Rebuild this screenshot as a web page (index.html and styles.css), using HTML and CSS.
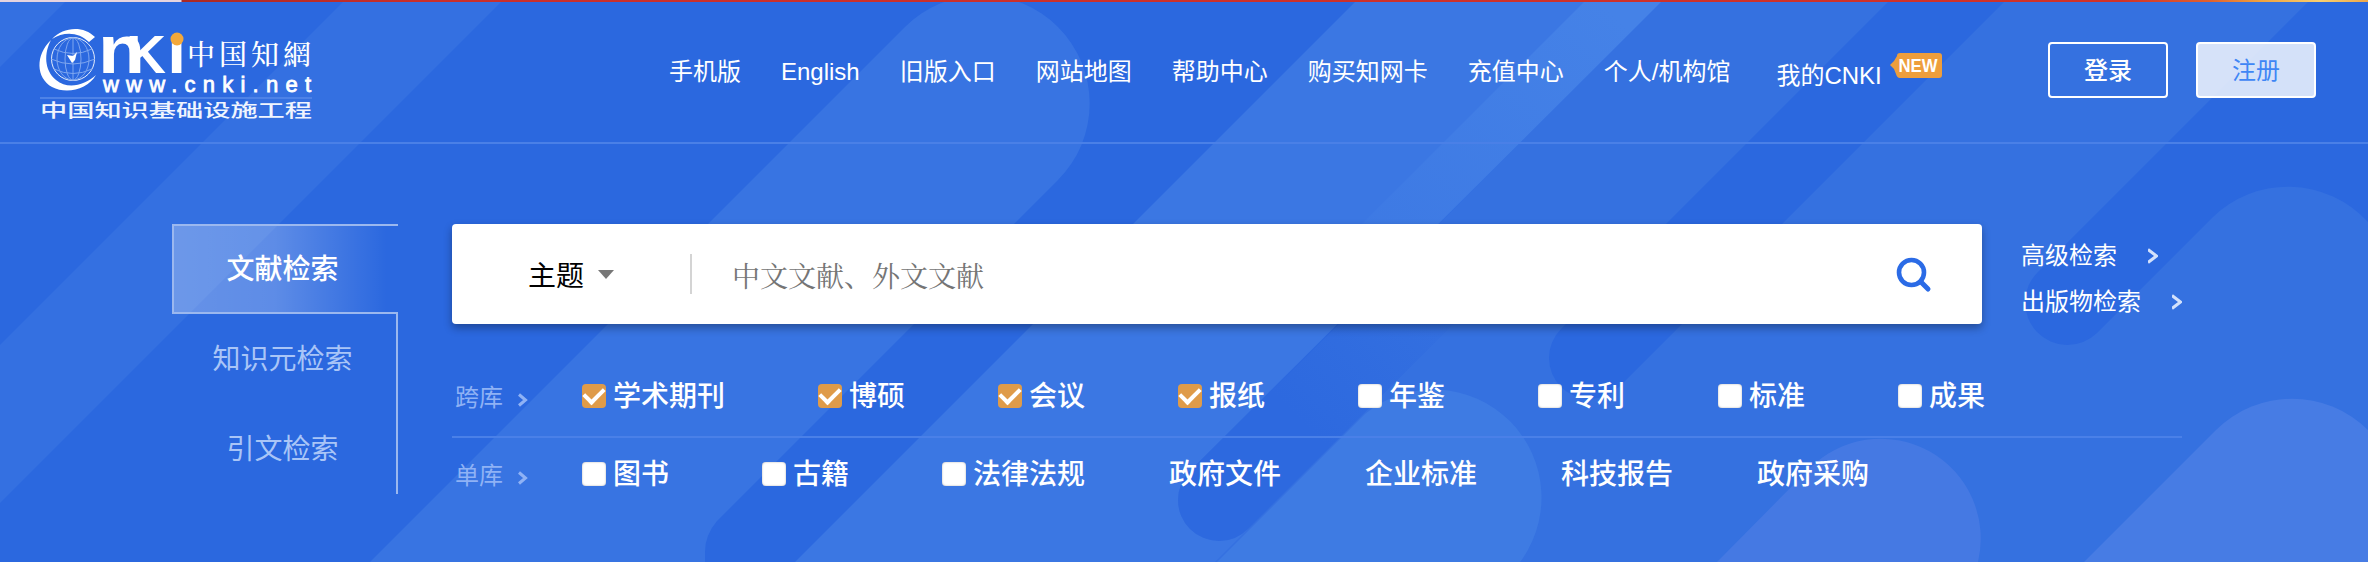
FILE: index.html
```html
<!DOCTYPE html>
<html lang="zh-CN">
<head>
<meta charset="utf-8">
<title>中国知网</title>
<link rel="stylesheet" href="styles.css">
</head>
<body>
<div class="page">
  <svg class="backdrop" viewBox="0 0 2368 562" aria-hidden="true">
    <defs>
      <linearGradient id="gap" gradientUnits="userSpaceOnUse" x1="1450" y1="270" x2="1300" y2="420"><stop offset="0" stop-color="#2d69df" stop-opacity="0"/><stop offset="1" stop-color="#2d69df"/></linearGradient>
      <linearGradient id="beam" gradientUnits="userSpaceOnUse" x1="1600" y1="0" x2="1300" y2="300"><stop offset="0" stop-color="#4582e7"/><stop offset="1" stop-color="#4582e7" stop-opacity="0"/></linearGradient>
    </defs>
    <path fill="#3470e1" d="M0 0H67L0 67ZM345 0H503L0 503V345Z"/>
    <path fill="#3874e2" d="M905 27A108 108 0 0 1 1058 180L717 521Q705 535 705 552V562H370Z"/>
    <path fill="#3571e0" d="M1663 0H1890L1561 329A41 41 0 0 0 1619 387L2006 0H2310L2038 272A42 42 0 0 0 2097 333L2212 218A108 108 0 0 1 2368 222V562H1101Z"/>
    <path fill="#3b77e3" d="M1357 0H1663L1190 471A41 41 0 0 0 1248 529L1215 562H795Z"/>
    <path fill="url(#beam)" d="M1586 0H1663L1313 350H1236Z"/>
    <path fill="url(#gap)" d="M1460 203L1190 471A41 41 0 0 0 1248 529L1560 218Z"/>
    <path fill="#3e7be3" d="M1365 414A108 108 0 0 1 1517 566H1213Z"/>
    <path fill="#4579e3" d="M1809 469A100 100 0 0 1 1978 562H1717Z"/>
    <path fill="#477ce4" d="M2216 430A108 108 0 0 1 2368 430V562H2084Z"/>
  </svg>
  <div class="strip"></div>
  <header class="header">
    <svg class="logo" viewBox="0 0 272 90" role="img" aria-label="CNKI">
      <path fill="#fff" d="M12 11C23-1 43-3 55 9L49 14C39 4 24 3 12 11ZM11 12C-5 27-4 50 12 59C27 67 48 61 56 47C45 57 28 62 16 52C4 42 4 25 11 12Z"/>
      <g fill="none" stroke="#7ea6ef" stroke-width="1"><circle cx="33" cy="31" r="21.500" stroke="#e6eefc"/><ellipse cx="33" cy="31" rx="8" ry="21"/><ellipse cx="33" cy="31" rx="16" ry="21"/><path d="M14 21Q33 30 52 21M11 31Q33 41 55 31M14 41Q33 50 52 41M33 10V52"/></g>
      <path fill="#fff" d="M27 27L33 28L37 24L35 32L32 35Z"/>
      <g fill="#fff" class="logo-bold">
        <text x="58" y="45" font-size="69" textLength="47" lengthAdjust="spacingAndGlyphs">n</text>
        <text x="86" y="45" font-size="53" textLength="40" lengthAdjust="spacingAndGlyphs">K</text>
        <text x="127" y="45" font-size="69">ı</text>
        <text class="logo-url" x="63" y="64" font-size="22" textLength="208">www.cnki.net</text>
      </g>
      <circle cx="137" cy="11" r="6.500" fill="#f3a83b"/>
      <text class="logo-brush" x="147" y="37" font-size="28" textLength="124" fill="#fff">中国知網</text>
      <path stroke="#4d82e7" stroke-width="2" d="M0 70H272"/>
      <text class="logo-sub" x="0" y="89" font-size="18" textLength="272" lengthAdjust="spacingAndGlyphs" fill="#f0f5fe">中国知识基础设施工程</text>
    </svg>
    <nav class="nav">
      <a>手机版</a><a>English</a><a>旧版入口</a><a>网站地图</a><a>帮助中心</a><a>购买知网卡</a><a>充值中心</a><a>个人/机构馆</a>
      <a class="mine">我的CNKI<svg class="new" viewBox="0 0 54 28"><path fill="#ee9e3c" d="M8 4Q8 1 11 1H50Q53 1 53 4V23Q53 26 50 26H11Q8 26 7 22L5 17L1 13L5 9Z"/><text x="9.500" y="20" font-size="18" textLength="39" lengthAdjust="spacingAndGlyphs" fill="#fff">NEW</text></svg></a>
    </nav>
    <div class="account"><button class="btn">登录</button><button class="btn register">注册</button></div>
  </header>
  <main class="main">
    <ul class="tabs"><li class="active">文献检索</li><li>知识元检索</li><li>引文检索</li></ul>
    <section class="content">
      <div class="top">
        <div class="search">
          <div class="field">主题<span class="caret"></span></div>
          <div class="query">中文文献、外文文献</div>
          <svg class="glass" viewBox="0 0 36 36" fill="none" stroke="#2b6be6"><circle cx="15.500" cy="15.500" r="12.500" stroke-width="4.600"/><path stroke-width="5" stroke-linecap="round" d="M24.500 24.500L32 32"/></svg>
        </div>
        <div class="links">
          <a>高级检索<svg viewBox="0 0 10 16"><path d="M0 1.500L8.500 8L0 14.500"/></svg></a>
          <a>出版物检索<svg viewBox="0 0 10 16"><path d="M0 1.500L8.500 8L0 14.500"/></svg></a>
        </div>
      </div>
      <div class="row cross">
        <span class="label">跨库<svg viewBox="0 0 10 14"><path d="M1 1.500L7.500 7L1 12.500"/></svg></span>
        <label><i class="box on"></i>学术期刊</label><label><i class="box on"></i>博硕</label><label><i class="box on"></i>会议</label><label><i class="box on"></i>报纸</label><label><i class="box"></i>年鉴</label><label><i class="box"></i>专利</label><label><i class="box"></i>标准</label><label><i class="box"></i>成果</label>
      </div>
      <div class="row single">
        <span class="label">单库<svg viewBox="0 0 10 14"><path d="M1 1.500L7.500 7L1 12.500"/></svg></span>
        <label><i class="box"></i>图书</label><label><i class="box"></i>古籍</label><label class="last"><i class="box"></i>法律法规</label><a>政府文件</a><a>企业标准</a><a>科技报告</a><a>政府采购</a>
      </div>
    </section>
  </main>
</div>
</body>
</html>
```
FILE: styles.css
```css
* { box-sizing: border-box; }
body { margin: 0; font-family: "Liberation Sans", "Noto Sans CJK SC", sans-serif; }
.page { position: relative; width: 2368px; height: 562px; overflow: hidden; background: #2b68df; color: #fff; }
.backdrop { position: absolute; inset: 0; width: 2368px; height: 562px; }
.strip { position: relative; height: 2px; background: linear-gradient(90deg, #e5d3df 0 181px, #aa2924 182px, #c92f2b 420px, #d03229 2120px, #e0602e 2210px, #f0a13e 2260px, #f8cf70 2320px, #eda74b); }
.header { position: relative; display: flex; height: 142px; padding: 0 52px 0 40px; border-bottom: 2px solid #4a80e7; }
.logo { flex: none; width: 272px; height: 90px; margin-top: 26px; overflow: visible; }
.logo-bold { font-family: "Liberation Sans", sans-serif; font-weight: 700; }
.logo-url { font-weight: 400; stroke: #fff; stroke-width: .8px; }
.logo-brush { font-family: "Noto Serif CJK SC", "Noto Sans CJK TC", serif; font-weight: 500; }
.logo-sub { font-family: "Noto Sans CJK SC", sans-serif; font-weight: 500; }
.nav { display: flex; gap: 40px; margin: 52px 0 0 357px; font-size: 24px; line-height: 36px; white-space: nowrap; }
.mine { display: flex; margin-left: 6px; padding-top: 4px; }
.new { width: 54px; height: 28px; margin: -6px 0 0 7px; font-weight: 700; }
.account { display: flex; gap: 28px; margin: 40px 0 0 auto; }
.btn { width: 120px; height: 56px; padding: 0 0 4px; border: 2px solid #fff; border-radius: 4px; background: transparent; color: #fff; font: 500 24px "Noto Sans CJK SC", sans-serif; }
.register { background: rgba(255, 255, 255, .8); color: #3f86f5; font-weight: 400; }
.main { position: relative; display: flex; gap: 54px; padding: 80px 0 0 172px; }
.tabs { width: 226px; height: 270px; margin: 0; padding: 0; list-style: none; font-size: 28px; line-height: 92px; text-align: center; color: #a9c5f7; }
.tabs li { height: 90px; padding-right: 3px; border-right: 2px solid #9bb8ef; }
.tabs .active { padding-right: 7px; border: 2px solid #9bb8ef; border-right: 0; line-height: 88px; color: #fff; font-weight: 500; background: linear-gradient(90deg, rgba(255,255,255,.28), rgba(255,255,255,.24) 45%, transparent 95%); }
.content { width: 1730px; }
.top { display: flex; }
.search { display: flex; align-items: center; width: 1530px; height: 100px; border-radius: 4px; background: #fff; color: #000; font-size: 28px; box-shadow: 0 4px 9px rgba(0, 0, 0, .32); }
.field { display: flex; align-items: center; width: 240px; height: 40px; padding-left: 76px; border-right: 2px solid #d4d4d4; }
.caret { margin-left: 14px; border: 8px solid transparent; border-top: 9px solid #777; border-bottom: 0; }
.query { flex: 1; padding: 1px 0 0 40px; color: #757575; font-family: "Noto Serif CJK SC", "Noto Sans CJK SC", serif; font-weight: 400; }
.glass { width: 36px; height: 36px; margin: 1px 50px 0 0; }
.links { display: flex; flex-direction: column; gap: 10px; padding: 14px 0 0 39px; font-size: 24px; line-height: 36px; white-space: nowrap; }
.links a { display: flex; align-items: center; }
.links svg { width: 10px; height: 16px; margin-left: 31px; fill: none; stroke: #d3e1fb; stroke-width: 3; }
.row { display: flex; align-items: center; font-size: 28px; line-height: 36px; white-space: nowrap; }
.cross { height: 80px; margin-top: 34px; border-bottom: 2px solid #4a80e8; }
.single { height: 74px; }
.label { display: flex; align-items: center; width: 130px; padding: 2px 0 0 3px; font-size: 24px; color: #8fb2f5; }
.label svg { width: 10px; height: 14px; margin: 4px 0 0 15px; fill: none; stroke: #8fb2f5; stroke-width: 3; }
.row label { display: flex; align-items: center; gap: 7px; margin-right: 93px; font-weight: 500; }
.row .last { margin-right: 84px; }
.row a { margin-right: 84px; font-weight: 500; }
.box { display: grid; place-items: center; width: 24px; height: 24px; margin-top: -2px; border-radius: 4px; background: #fff; box-shadow: inset 0 0 2px #aaa; }
.on { background: #df9b49; box-shadow: none; }
.on::after { content: ""; width: 16px; height: 9px; margin-top: -5px; border: solid #fff; border-width: 0 0 4px 4px; transform: rotate(-45deg); }
```
